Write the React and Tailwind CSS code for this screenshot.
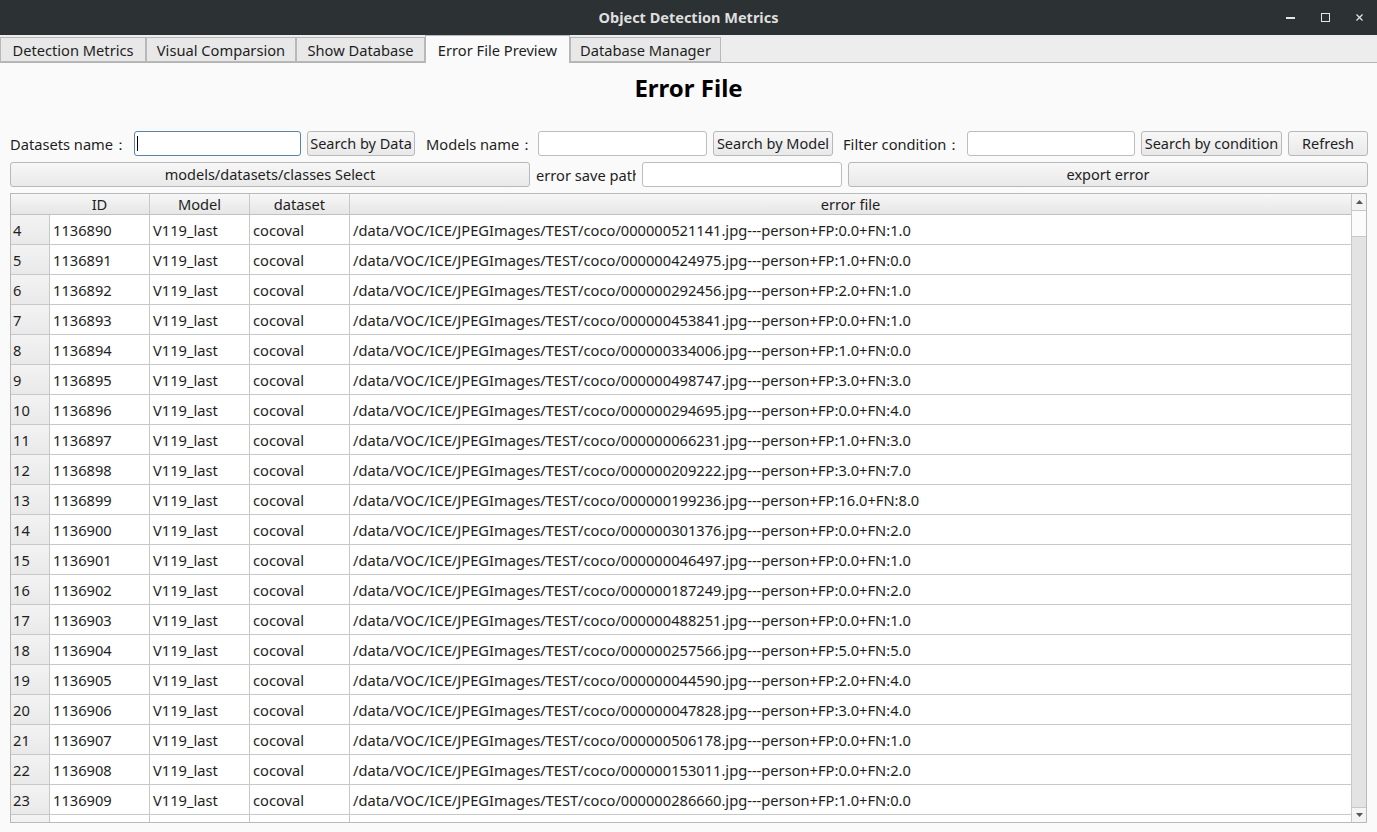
const rows = [
  [4, 1136890, '000000521141', '0.0', '1.0'],
  [5, 1136891, '000000424975', '1.0', '0.0'],
  [6, 1136892, '000000292456', '2.0', '1.0'],
  [7, 1136893, '000000453841', '0.0', '1.0'],
  [8, 1136894, '000000334006', '1.0', '0.0'],
  [9, 1136895, '000000498747', '3.0', '3.0'],
  [10, 1136896, '000000294695', '0.0', '4.0'],
  [11, 1136897, '000000066231', '1.0', '3.0'],
  [12, 1136898, '000000209222', '3.0', '7.0'],
  [13, 1136899, '000000199236', '16.0', '8.0'],
  [14, 1136900, '000000301376', '0.0', '2.0'],
  [15, 1136901, '000000046497', '0.0', '1.0'],
  [16, 1136902, '000000187249', '0.0', '2.0'],
  [17, 1136903, '000000488251', '0.0', '1.0'],
  [18, 1136904, '000000257566', '5.0', '5.0'],
  [19, 1136905, '000000044590', '2.0', '4.0'],
  [20, 1136906, '000000047828', '3.0', '4.0'],
  [21, 1136907, '000000506178', '0.0', '1.0'],
  [22, 1136908, '000000153011', '0.0', '2.0'],
  [23, 1136909, '000000286660', '1.0', '0.0'],
];

const tabs = ['Detection Metrics', 'Visual Comparsion', 'Show Database', 'Error File Preview', 'Database Manager'];
const tabWidths = ['w-[146px]', 'w-[150px]', 'w-[129px]', 'w-[145px]', 'w-[151px]'];

const Btn = ({ children, className = '' }) => (
  <button className={`h-[25px] rounded-[3px] border border-[#b8b8b8] bg-gradient-to-b from-[#f7f7f7] to-[#e9e9e9] text-[14.5px] text-[#1e1e1e] leading-none whitespace-nowrap overflow-hidden shrink-0 ${className}`}>
    {children}
  </button>
);

const Input = ({ className = '', focused = false }) => (
  <div className={`h-[25px] rounded-[3px] bg-white border shrink-0 ${focused ? 'border-[#5b84a8]' : 'border-[#bdbdbd]'} flex items-center ${className}`}>
    {focused && <div className="ml-[2px] w-px h-[15px] bg-black" />}
  </div>
);

export default function App() {
  return (
    <div className="w-[1377px] h-[832px] bg-[#fafafa] flex flex-col overflow-hidden text-[#1e1e1e] text-[14.67px]" style={{ fontFamily: '"Noto Sans", "Open Sans", sans-serif' }}>
      {/* title bar */}
      <div className="h-[35px] bg-[#2c3134] relative flex items-center justify-center shrink-0">
        <span className="text-[14.5px] font-bold text-[#dfdfdf]">Object Detection Metrics</span>
        <div className="absolute right-0 top-0 h-[35px] flex items-center">
          <div className="w-[9px] h-[1.5px] bg-[#e6e6e6] mr-[26px] mt-[1px]" />
          <div className="w-[9px] h-[9px] border border-[#e6e6e6] mr-[26px]" />
          <svg width="7" height="7" viewBox="0 0 7 7" className="mr-[14px]">
            <path d="M0.5 0.5 L6.5 6.5 M6.5 0.5 L0.5 6.5" stroke="#e6e6e6" strokeWidth="1.2" />
          </svg>
        </div>
      </div>

      {/* tab bar */}
      <div className="h-[28px] bg-[#ededed] border-b border-[#b4b4b4] flex items-end shrink-0">
        {tabs.map((t, i) => {
          const active = i === 3;
          return (
            <div
              key={t}
              className={`${tabWidths[i]} ${active ? 'h-[28px] bg-[#fafafa] -mb-px border-b-0' : 'h-[25px] bg-[#e8e8e8]'} border border-[#b8b8b8] flex items-center justify-center shrink-0 whitespace-nowrap`}
            >
              {t}
            </div>
          );
        })}
      </div>

      {/* content */}
      <div className="flex flex-col px-[10px] flex-1 min-h-0">
        <div className="h-[68px] flex items-start justify-center pt-[10px]">
          <h1 className="text-[24px] font-bold leading-[30px] text-black">Error File</h1>
        </div>

        <div className="flex items-center h-[25px] whitespace-nowrap">
          <span className="w-[124px] shrink-0">Datasets name：</span>
          <Input focused className="w-[167px]" />
          <Btn className="ml-[6px] w-[108px]">Search by Data</Btn>
          <span className="pl-[11px] w-[123px] shrink-0">Models name：</span>
          <Input className="w-[169px]" />
          <Btn className="ml-[6px] w-[120px]">Search by Model</Btn>
          <span className="pl-[10px] w-[134px] shrink-0">Filter condition：</span>
          <Input className="w-[168px]" />
          <Btn className="ml-[6px] w-[141px]">Search by condition</Btn>
          <Btn className="ml-[6px] w-[80px]">Refresh</Btn>
        </div>

        <div className="flex items-center h-[25px] mt-[6px]">
          <Btn className="w-[520px]">models/datasets/classes Select</Btn>
          <span className="ml-[6px] w-[100px] overflow-hidden whitespace-nowrap shrink-0">error save path</span>
          <Input className="ml-[6px] w-[200px]" />
          <Btn className="ml-[6px] w-[520px]">export error</Btn>
        </div>

        {/* table */}
        <div className="mt-[6px] h-[630px] border border-[#b9b9b9] bg-white flex overflow-hidden">
          <div className="flex-1 flex flex-col min-w-0">
            <div className="h-[21px] flex leading-[20px] bg-gradient-to-b from-[#f7f7f7] to-[#e6e6e6] border-b border-[#c2c2c2] shrink-0">
              <div className="w-[139px] text-center pl-[39px] border-r border-[#c8c8c8]">ID</div>
              <div className="w-[100px] text-center border-r border-[#c8c8c8]">Model</div>
              <div className="w-[100px] text-center border-r border-[#c8c8c8]">dataset</div>
              <div className="flex-1 text-center">error file</div>
            </div>
            <div className="flex-1 overflow-hidden">
              {[...rows, [null]].map((r, i) => (
                <div key={i} className="h-[30px] flex border-b border-[#c8c8c8]">
                  <div className="w-[39px] shrink-0 bg-gradient-to-b from-[#f3f3f3] to-[#e9e9e9] border-r border-[#c8c8c8] pl-[2px] flex items-center">{r[0]}</div>
                  <div className="w-[100px] shrink-0 border-r border-[#c8c8c8] pl-[3px] flex items-center">{r[1]}</div>
                  <div className="w-[100px] shrink-0 border-r border-[#c8c8c8] pl-[3px] flex items-center">{r[0] && 'V119_last'}</div>
                  <div className="w-[100px] shrink-0 border-r border-[#c8c8c8] pl-[3px] flex items-center">{r[0] && 'cocoval'}</div>
                  <div className="flex-1 pl-[3px] flex items-center whitespace-nowrap">
                    {r[0] && `/data/VOC/ICE/JPEGImages/TEST/coco/${r[2]}.jpg---person+FP:${r[3]}+FN:${r[4]}`}
                  </div>
                </div>
              ))}
            </div>
          </div>
          {/* scrollbar */}
          <div className="w-[15px] shrink-0 border-l border-[#c8c8c8] bg-[#e3e3e3] flex flex-col">
            <div className="h-[17px] bg-[#f4f4f4] border-b border-[#c8c8c8] flex items-center justify-center">
              <svg width="7" height="4" viewBox="0 0 7 4"><path d="M0 4 L3.5 0 L7 4 Z" fill="#555" /></svg>
            </div>
            <div className="h-[26px] bg-[#fbfbfb] border-b border-[#c8c8c8]" />
            <div className="flex-1" />
            <div className="h-[15px] bg-[#f4f4f4] border-t border-[#c8c8c8] flex items-center justify-center">
              <svg width="7" height="4" viewBox="0 0 7 4"><path d="M0 0 L7 0 L3.5 4 Z" fill="#555" /></svg>
            </div>
          </div>
        </div>
      </div>
    </div>
  );
}
